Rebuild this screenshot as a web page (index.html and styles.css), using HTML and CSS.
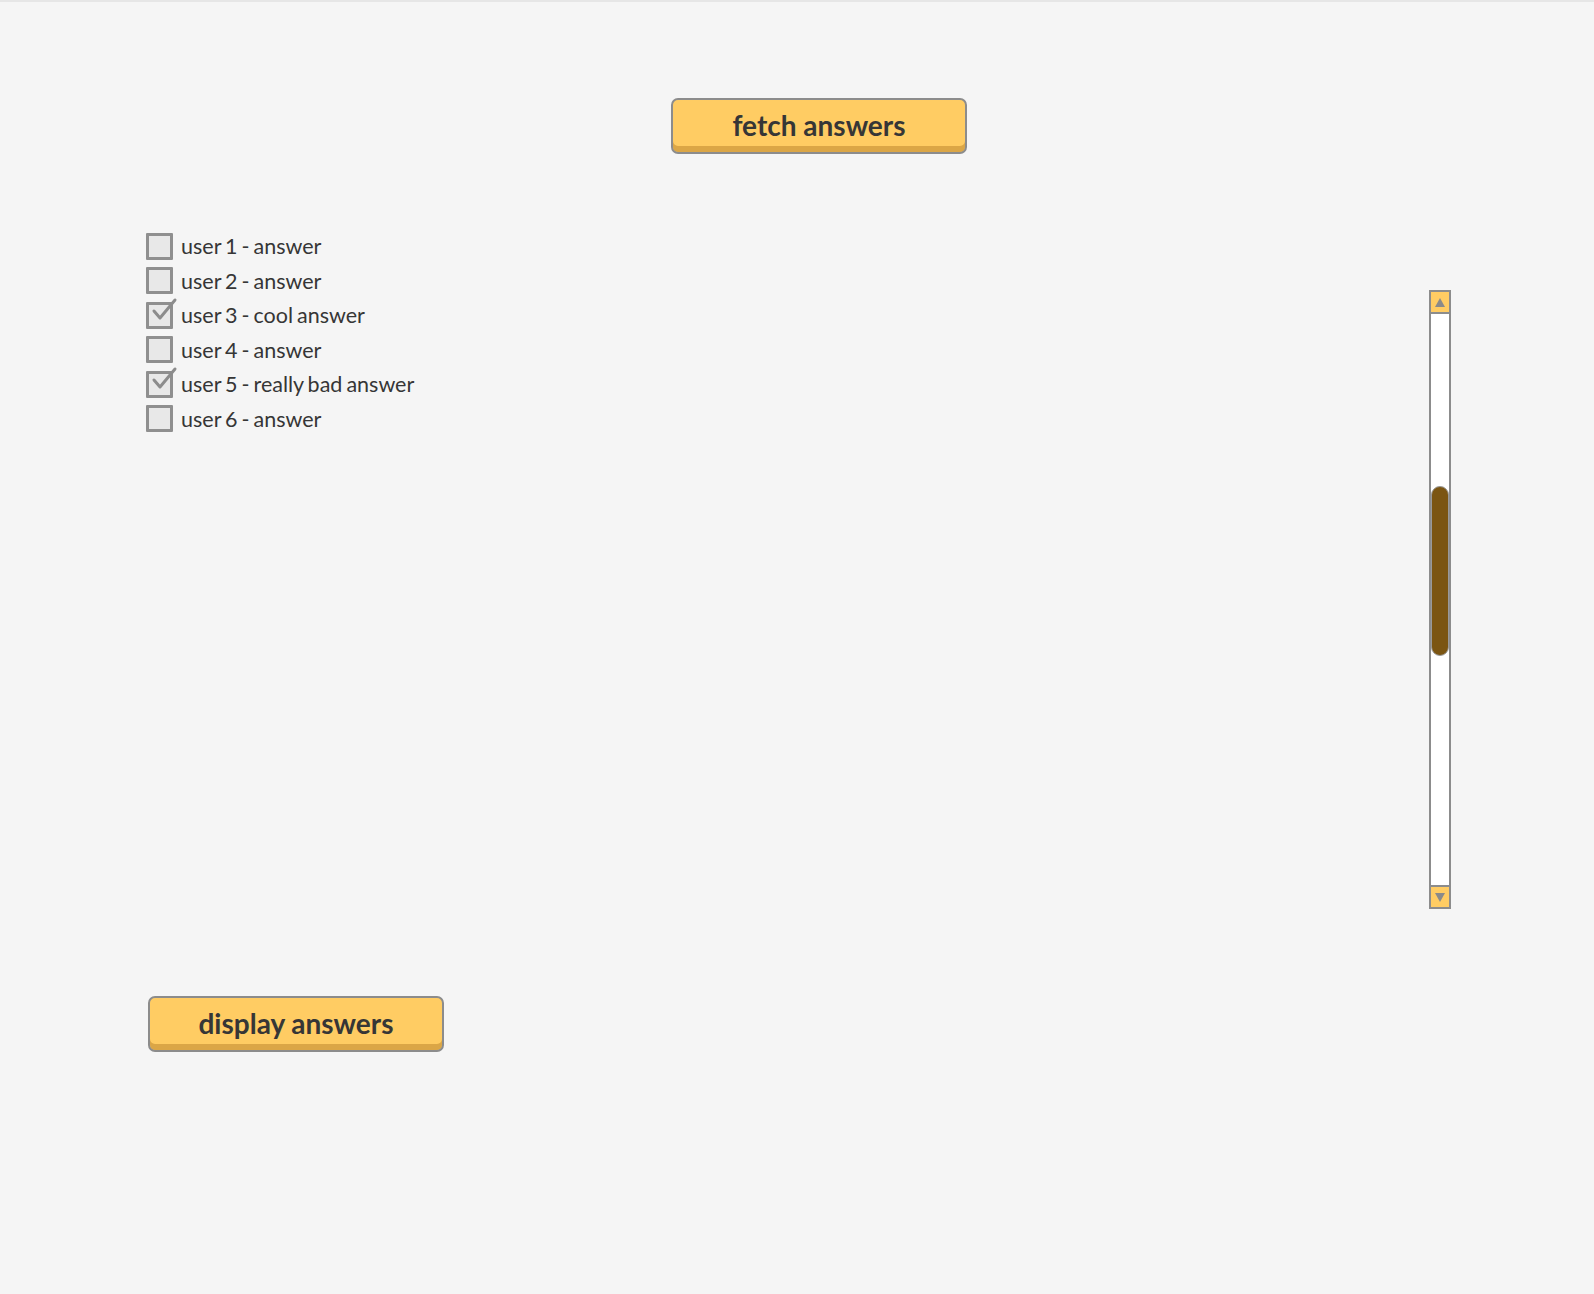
FILE: index.html
```html
<!DOCTYPE html>
<html>
<head>
<meta charset="utf-8">
<link rel="stylesheet" href="styles.css">
</head>
<body>
<main class="page">
  <div class="top-row">
    <button class="btn btn-fetch">fetch answers</button>
  </div>
  <div class="middle">
    <ul class="answers">
      <li class="answer"><span class="box"></span><span class="label">user 1 - answer</span></li>
      <li class="answer"><span class="box"></span><span class="label">user 2 - answer</span></li>
      <li class="answer"><span class="box checked"><svg class="tick" viewBox="0 0 30 30" width="30" height="30"><path d="M6 14 L12 21 L27 3" fill="none" stroke="#8c8c8c" stroke-width="3" stroke-linecap="round" stroke-linejoin="round"/></svg></span><span class="label">user 3 - cool answer</span></li>
      <li class="answer"><span class="box"></span><span class="label">user 4 - answer</span></li>
      <li class="answer"><span class="box checked"><svg class="tick" viewBox="0 0 30 30" width="30" height="30"><path d="M6 14 L12 21 L27 3" fill="none" stroke="#8c8c8c" stroke-width="3" stroke-linecap="round" stroke-linejoin="round"/></svg></span><span class="label">user 5 - really bad answer</span></li>
      <li class="answer"><span class="box"></span><span class="label">user 6 - answer</span></li>
    </ul>
    <div class="scrollbar">
      <div class="arrow arrow-up"><span class="tri tri-up"></span></div>
      <div class="track"><div class="thumb"></div></div>
      <div class="arrow arrow-down"><span class="tri tri-down"></span></div>
    </div>
  </div>
  <div class="bottom-row">
    <button class="btn btn-display">display answers</button>
  </div>
</main>
</body>
</html>
```
FILE: styles.css
```css
html, body {
  margin: 0;
  padding: 0;
  background: #f5f5f5;
}
body {
  font-family: Lato, "Noto Sans", sans-serif;
  color: #333333;
}
.page {
  border-top: 2px solid #e6e6e6;
  min-height: 1292px;
  display: flex;
  flex-direction: column;
}
.top-row {
  padding-top: 96px;
  padding-left: 671px;
  display: flex;
}
.btn {
  width: 296px;
  height: 56px;
  box-sizing: border-box;
  background: #ffcc63;
  border: 2px solid #8c8c8c;
  border-radius: 7px;
  box-shadow: inset 0 -6px 0 #dba646;
  font-family: Lato, "Noto Sans", sans-serif;
  font-weight: 700;
  font-size: 28px;
  color: #363636;
  padding: 0 0 2px 0;
  line-height: 1;
}
.middle {
  margin-top: 75px;
  display: flex;
  justify-content: space-between;
  align-items: flex-start;
  padding: 0 143px 0 146px;
}
.answers {
  list-style: none;
  margin: 0;
  padding: 0;
  display: flex;
  flex-direction: column;
}
.answer {
  display: flex;
  align-items: center;
  height: 34.5px;
  gap: 8px;
}
.box {
  position: relative;
  width: 27px;
  height: 27px;
  box-sizing: border-box;
  border: 3px solid #8f8f8f;
  background: #e8e8e8;
  border-radius: 1px;
  flex: none;
}
.tick {
  position: absolute;
  left: -1px;
  top: -8px;
}
.label {
  font-size: 21.5px;
  color: #363636;
  word-spacing: -1.5px;
}
.scrollbar {
  margin-top: 61px;
  width: 22px;
  height: 619px;
  box-sizing: border-box;
  border: 2px solid #8c8c8c;
  background: #ffffff;
  display: flex;
  flex-direction: column;
}
.arrow {
  height: 20px;
  background: #ffcc63;
  display: flex;
  align-items: center;
  justify-content: center;
  flex: none;
}
.arrow-up { border-bottom: 2px solid #8c8c8c; }
.arrow-down { border-top: 2px solid #8c8c8c; }
.tri {
  width: 0;
  height: 0;
  border-left: 5px solid transparent;
  border-right: 5px solid transparent;
}
.tri-up { border-bottom: 9px solid #8a8a8a; }
.tri-down { border-top: 9px solid #8a8a8a; }
.track {
  flex: 1;
  display: flex;
  flex-direction: column;
  align-items: center;
  padding-top: 172px;
}
.thumb {
  width: 18px;
  height: 170px;
  box-sizing: border-box;
  background: #7b5512;
  border: 1px solid #9a9a9a;
  border-radius: 9px;
}
.bottom-row {
  margin-top: 87px;
  padding-left: 148px;
  display: flex;
}
```
